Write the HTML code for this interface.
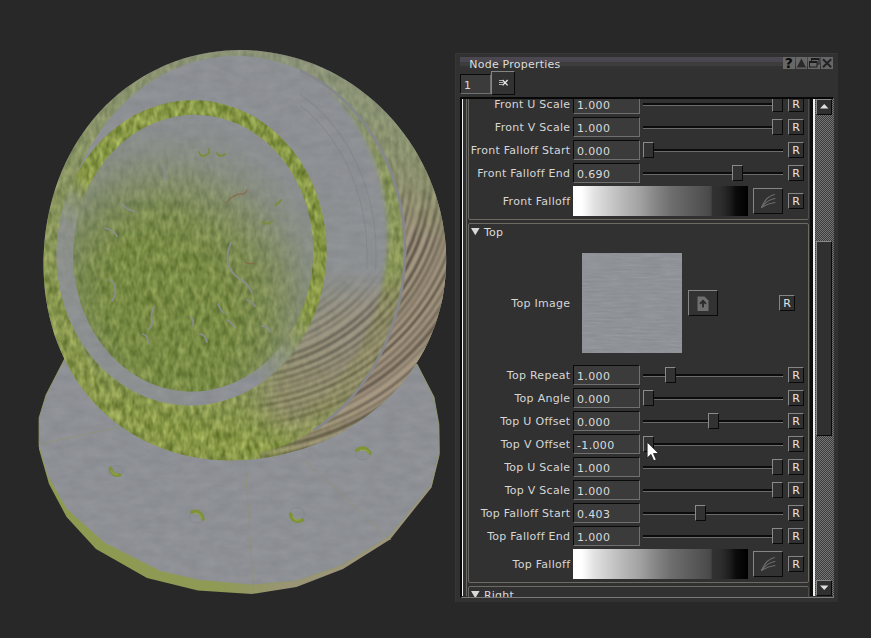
<!DOCTYPE html>
<html><head><meta charset="utf-8"><title>Node Properties</title>
<style>
html,body{margin:0;padding:0;background:#282828;}
body{width:871px;height:638px;position:relative;overflow:hidden;font-family:"DejaVu Sans","Liberation Sans",sans-serif;font-size:11px;color:#d4d4d4;}
div{position:absolute;box-sizing:border-box;}
#panel{left:455px;top:53px;width:383px;height:549px;background:#313131;border-top:1px solid #363636;border-left:1px solid #363636;}
#title{left:459.5px;top:57px;width:373.5px;height:12.800px;background:linear-gradient(180deg,#4c4852 0,#4a4650 4.600px,#3d3d3d 5.200px,#3c3c3c 8.800px,#343434 9.200px,#323232 12.800px);}
#ttext{left:469.3px;top:56.5px;font-size:11px;letter-spacing:0.22px;color:#dcdcdc;white-space:nowrap;line-height:16px;}
.tb{top:57px;width:12px;height:12px;background:#676767;}
.in{left:573px;width:67px;height:19.5px;background:#3b3b3b;border:1.5px solid #0a0a0a;border-right:1px solid #707070;border-bottom:1.5px solid #707070;line-height:21px;padding-left:3px;letter-spacing:0.35px;color:#dadada;white-space:nowrap;}
.lb{left:440px;width:130.300px;text-align:right;line-height:16px;height:16px;letter-spacing:0.27px;white-space:nowrap;color:#d6d6d6;}
.trk{left:643px;width:140px;height:2px;background:#0c0c0c;}
.trk2{left:643px;width:140px;height:1.400px;background:#6a6a6a;border-right:1px solid #888;}
.th{width:11px;height:16px;background:#323232;border-top:1px solid #8a8a8a;border-left:1px solid #8a8a8a;border-right:1.500px solid #0a0a0a;border-bottom:1.500px solid #0a0a0a;}
.rb{width:16px;height:16px;background:#303030;border-top:1px solid #858585;border-left:1px solid #858585;border-right:1.500px solid #0a0a0a;border-bottom:1.500px solid #0a0a0a;font-size:11px;line-height:15.400px;text-align:center;color:#e6e6e6;padding-left:0px}
.btn{background:#323232;border-top:1px solid #858585;border-left:1px solid #858585;border-right:1.500px solid #0a0a0a;border-bottom:1.500px solid #0a0a0a;box-sizing:content-box;}
.ramp{left:573px;width:175px;height:30px;background:linear-gradient(90deg,#fff 0%,#fff 5%,#e2e2e2 12%,#c2c2c2 24%,#a2a2a2 38%,#868686 47%,#6e6e6e 56%,#5c5c5c 67%,#4c4c4c 77%,#454545 79%,#313131 79.500%,#2e2e2e 84%,#262626 87%,#1b1b1b 90%,#0b0b0b 93%,#000 100%);}
.grp{border:1px solid #6c6a62;border-radius:2px;}
#scroll{left:459.600px;top:97px;width:374.900px;height:500.500px;border-top:2px solid #080808;border-left:2px solid #080808;border-right:1px solid #7a7a7a;border-bottom:1px solid #7a7a7a;overflow:hidden;}
#sbtrack{left:815px;top:99px;width:18.500px;height:497px;background:#585858 repeating-conic-gradient(#3c3c3c 0 25%,#747474 0 50%) 0 0/2px 2px;}
.sbb{left:815.500px;width:16.500px;height:15.500px;background:#303030;border-top:1px solid #8a8a8a;border-left:1px solid #8a8a8a;border-right:1.500px solid #0a0a0a;border-bottom:1.500px solid #0a0a0a;}
</style></head><body>
<svg width="460" height="638" viewBox="0 0 460 638" style="position:absolute;left:0;top:0">
<defs>
<clipPath id="sc"><path d="M446.1 256.0 C446.2 261.9 446.1 267.8 445.7 273.6 C445.3 279.5 444.6 285.4 443.7 291.2 C442.8 297.0 441.6 302.8 440.1 308.5 C438.6 314.3 436.9 319.9 434.9 325.5 C432.9 331.0 430.6 336.5 428.1 341.9 C425.6 347.2 422.9 352.5 419.9 357.5 C416.9 362.6 413.6 367.6 410.2 372.4 C406.7 377.1 403.0 381.8 399.2 386.2 C395.3 390.6 391.2 394.9 387.0 399.0 C382.7 403.0 378.3 406.9 373.7 410.6 C369.2 414.3 364.4 417.8 359.6 421.1 C354.7 424.3 349.7 427.4 344.6 430.3 C339.5 433.2 334.3 435.9 329.0 438.4 C323.7 440.8 318.3 443.1 312.9 445.2 C307.4 447.3 301.8 449.1 296.2 450.8 C290.6 452.5 284.9 453.9 279.1 455.2 C273.4 456.4 267.6 457.5 261.7 458.3 C255.8 459.1 249.9 459.7 244.0 460.0 C238.1 460.4 232.1 460.5 226.1 460.4 C220.1 460.2 214.1 459.8 208.2 459.2 C202.2 458.5 196.2 457.6 190.3 456.4 C184.4 455.2 178.5 453.7 172.7 451.9 C166.9 450.2 161.1 448.1 155.5 445.7 C149.9 443.4 144.4 440.8 139.0 437.8 C133.7 434.9 128.4 431.7 123.4 428.2 C118.4 424.8 113.5 421.0 108.9 417.1 C104.2 413.1 99.8 408.8 95.6 404.4 C91.4 400.0 87.4 395.3 83.7 390.5 C80.1 385.6 76.6 380.6 73.4 375.4 C70.2 370.3 67.3 365.0 64.7 359.5 C62.0 354.1 59.6 348.6 57.5 343.0 C55.3 337.4 53.5 331.7 51.9 325.9 C50.2 320.2 48.9 314.4 47.7 308.6 C46.6 302.8 45.7 296.9 45.0 291.1 C44.3 285.2 43.9 279.4 43.7 273.5 C43.4 267.7 43.4 261.8 43.6 256.0 C43.8 250.2 44.2 244.4 44.8 238.6 C45.4 232.8 46.2 227.0 47.2 221.3 C48.2 215.6 49.4 209.9 50.9 204.2 C52.3 198.6 53.9 193.0 55.7 187.5 C57.6 182.0 59.6 176.5 61.9 171.1 C64.2 165.7 66.7 160.4 69.4 155.2 C72.1 150.0 75.0 144.9 78.2 139.9 C81.3 134.9 84.7 130.1 88.3 125.4 C91.9 120.7 95.7 116.1 99.7 111.7 C103.7 107.4 108.0 103.1 112.4 99.2 C116.8 95.2 121.4 91.4 126.2 87.8 C131.0 84.2 136.0 80.9 141.1 77.7 C146.2 74.6 151.5 71.8 156.9 69.2 C162.3 66.5 167.8 64.2 173.4 62.1 C179.0 60.0 184.8 58.2 190.6 56.6 C196.4 55.1 202.3 53.8 208.2 52.8 C214.1 51.8 220.1 51.1 226.0 50.6 C232.0 50.2 238.0 50.0 244.0 50.1 C250.0 50.2 256.0 50.6 261.9 51.2 C267.9 51.9 273.8 52.8 279.6 53.9 C285.5 55.1 291.3 56.6 297.0 58.2 C302.7 59.9 308.3 61.9 313.9 64.0 C319.4 66.2 324.8 68.7 330.1 71.3 C335.4 74.0 340.6 76.8 345.6 79.9 C350.7 83.0 355.6 86.4 360.3 89.9 C365.1 93.4 369.7 97.1 374.1 101.0 C378.5 104.9 382.7 109.0 386.8 113.2 C390.9 117.4 394.7 121.9 398.4 126.4 C402.1 131.0 405.6 135.7 408.9 140.5 C412.2 145.4 415.3 150.3 418.2 155.4 C421.1 160.5 423.8 165.7 426.2 171.0 C428.7 176.3 431.0 181.7 433.0 187.2 C435.0 192.7 436.8 198.3 438.4 203.9 C440.0 209.5 441.3 215.3 442.4 221.0 C443.5 226.8 444.4 232.6 445.0 238.4 C445.6 244.2 446.0 250.1 446.1 256.0 Z"/></clipPath>
<clipPath id="eoc"><path d="M62.29 244.32 A171.5 196.5 2.7 0 1 404.91 260.48 A171.5 203 2.7 0 1 62.29 244.32 Z"/></clipPath>
<clipPath id="dlc2"><rect x="300" y="40" width="160" height="230"/></clipPath>
<clipPath id="dlc"><rect x="300" y="40" width="160" height="390"/></clipPath>
<clipPath id="dtc"><path d="M64.500 359 L46 395 L39 418 L39 446 L47.500 475.500 L66.600 509 L104.700 543 L160 571 L198 580 L252 585 L296.400 581 L343 565 L390 536 L431.500 485 L439.300 453.500 L439 425 L434 397 L417 364 Z"/></clipPath>
<filter id="grass" x="0" y="0" width="100%" height="100%" color-interpolation-filters="sRGB">
<feTurbulence type="fractalNoise" baseFrequency="0.190 0.095" numOctaves="2" seed="7"/>
<feColorMatrix values="0.460 0 0 0 0.295  0.420 0 0 0 0.380  0.340 0 0 0 0.100  0 0 0 0 1"/>
</filter>
<filter id="conc" x="0" y="0" width="100%" height="100%" color-interpolation-filters="sRGB">
<feTurbulence type="fractalNoise" baseFrequency="0.060 0.120" numOctaves="4" seed="5"/>
<feColorMatrix values="0.055 0 0 0 0.527  0.055 0 0 0 0.537  0.055 0 0 0 0.557  0 0 0 0 1"/>
</filter>
<filter id="b1"><feGaussianBlur stdDeviation="1"/></filter>
<filter id="b2"><feGaussianBlur stdDeviation="2"/></filter>
<filter id="b4"><feGaussianBlur stdDeviation="4"/></filter>
<filter id="b8"><feGaussianBlur stdDeviation="8"/></filter>
<filter id="b14"><feGaussianBlur stdDeviation="14"/></filter>
<linearGradient id="rimg" gradientUnits="userSpaceOnUse" x1="40" y1="0" x2="440" y2="0">
<stop offset="0" stop-color="#8d9a50"/><stop offset="0.450" stop-color="#8f9a55"/><stop offset="0.620" stop-color="#9a9576"/><stop offset="1" stop-color="#a09482"/></linearGradient>
<!-- grass-mask gradients (white = grass) -->
<linearGradient id="mout" gradientUnits="userSpaceOnUse" x1="300" y1="52" x2="200" y2="453">
<stop offset="0" stop-color="#585858"/><stop offset="0.200" stop-color="#808080"/><stop offset="0.450" stop-color="#a8a8a8"/><stop offset="0.700" stop-color="#e0e0e0"/><stop offset="1" stop-color="#f8f8f8"/></linearGradient>
<linearGradient id="mband" gradientUnits="userSpaceOnUse" x1="330" y1="60" x2="230" y2="440">
<stop offset="0" stop-color="#000"/><stop offset="0.500" stop-color="#080808"/><stop offset="0.700" stop-color="#505050"/><stop offset="0.850" stop-color="#c0c0c0"/><stop offset="1" stop-color="#fff"/></linearGradient>
<radialGradient id="mbowl" gradientUnits="userSpaceOnUse" cx="150" cy="330" r="225">
<stop offset="0" stop-color="#f4f4f4"/><stop offset="0.380" stop-color="#eeeeee"/><stop offset="0.520" stop-color="#c4c4c4"/><stop offset="0.640" stop-color="#848484"/><stop offset="0.770" stop-color="#3c3c3c"/><stop offset="0.900" stop-color="#121212"/><stop offset="1" stop-color="#050505"/></radialGradient>
<radialGradient id="haze" cx="0.520" cy="0.640" r="0.640"><stop offset="0" stop-color="#000" stop-opacity="0"/><stop offset="0.550" stop-color="#000" stop-opacity="0"/><stop offset="0.850" stop-color="#000" stop-opacity="0.300"/><stop offset="1" stop-color="#000" stop-opacity="0.500"/></radialGradient>
<linearGradient id="mringL" gradientUnits="userSpaceOnUse" x1="233.600" y1="188.100" x2="123.800" y2="355.300">
<stop offset="0" stop-color="#fff"/><stop offset="0.400" stop-color="#fff"/><stop offset="0.500" stop-color="#808080"/><stop offset="0.640" stop-color="#262626"/><stop offset="1" stop-color="#0c0c0c"/></linearGradient>
<linearGradient id="mringR" gradientUnits="userSpaceOnUse" x1="233.600" y1="188.100" x2="123.800" y2="355.300">
<stop offset="0" stop-color="#fff"/><stop offset="0.280" stop-color="#fff"/><stop offset="0.500" stop-color="#707070"/><stop offset="0.720" stop-color="#000"/><stop offset="1" stop-color="#000"/></linearGradient>
<clipPath id="halfR2"><rect x="300" y="60" width="160" height="400"/></clipPath>
<linearGradient id="mstrip" gradientUnits="userSpaceOnUse" x1="0" y1="90" x2="0" y2="440">
<stop offset="0" stop-color="#707070"/><stop offset="0.250" stop-color="#b8b8b8"/><stop offset="0.600" stop-color="#d0d0d0"/><stop offset="1" stop-color="#e8e8e8"/></linearGradient>
<clipPath id="halfL"><rect x="0" y="0" width="190" height="638"/></clipPath>
<clipPath id="halfR"><rect x="190" y="0" width="270" height="638"/></clipPath>
<linearGradient id="mwood" gradientUnits="userSpaceOnUse" x1="420" y1="140" x2="330" y2="450">
<stop offset="0" stop-color="#000"/><stop offset="0.120" stop-color="#404040"/><stop offset="0.300" stop-color="#f0f0f0"/><stop offset="0.800" stop-color="#fff"/><stop offset="1" stop-color="#c8c8c8"/></linearGradient>
<mask id="gm" maskUnits="userSpaceOnUse" x="0" y="0" width="460" height="638">
<rect x="40" y="46" width="410" height="420" fill="url(#mout)"/>
<g clip-path="url(#eoc)">
<rect x="40" y="46" width="410" height="420" fill="url(#mband)"/>
<g clip-path="url(#halfR2)"><path d="M62.29 244.32 A171.5 196.5 2.7 0 1 404.91 260.48 A171.5 203 2.7 0 1 62.29 244.32 Z M44.69 231.12 A171.5 196.5 2.7 0 1 387.31 247.28 A171.5 203 2.7 0 1 44.69 231.12 Z" fill-rule="evenodd" fill="url(#mstrip)" filter="url(#b2)"/></g>
</g>
<g clip-path="url(#halfL)"><ellipse cx="191.500" cy="252.900" rx="135.100" ry="152.700" transform="rotate(2.600 191.500 252.900)" fill="url(#mringL)"/></g><g clip-path="url(#halfR)"><ellipse cx="191.500" cy="252.900" rx="135.100" ry="152.700" transform="rotate(2.600 191.500 252.900)" fill="url(#mringR)"/></g>
<ellipse cx="193.200" cy="253.200" rx="120" ry="138.400" transform="rotate(2.800 193.200 253.200)" fill="url(#mbowl)"/><ellipse cx="193.200" cy="253.200" rx="120" ry="138.400" transform="rotate(2.800 193.200 253.200)" fill="url(#haze)"/>
</mask>
<mask id="bm" maskUnits="userSpaceOnUse" x="0" y="0" width="460" height="638"><ellipse cx="193.200" cy="253.200" rx="120" ry="138.400" transform="rotate(2.800 193.200 253.200)" fill="url(#mbowl)"/></mask>
<mask id="wm" maskUnits="userSpaceOnUse" x="0" y="0" width="460" height="638">
<rect x="260" y="46" width="200" height="420" fill="url(#mwood)"/>
<g clip-path="url(#eoc)"><rect x="40" y="46" width="410" height="420" fill="#000"/><path d="M320 300 L 420 285 L 405 390 L 300 428 L 232 424 L 262 388 Z" fill="#a8a8a8" filter="url(#b14)"/></g>
<ellipse cx="191.500" cy="252.900" rx="135.100" ry="152.700" transform="rotate(2.600 191.500 252.900)" fill="#000"/>
<path d="M40 300 L 200 300 L 290 460 L 40 460 Z" fill="#000" filter="url(#b14)"/>
</mask>
</defs>
<!-- disc -->
<path d="M64.500 359 L46 395 L39 418 L39 449 L49 484 L66.600 517 L96 549 L147 578 L198 590.500 L252 594 L296.400 587 L343 569 L390 539.500 L431.500 487.500 L439.300 456 L439 425 L434 397 L417 364 Z" fill="url(#rimg)"/>
<g clip-path="url(#dtc)"><rect x="30" y="350" width="420" height="250" filter="url(#conc)"/></g>
<g stroke="#8f9468" stroke-width="0.800" fill="none" opacity="0.750"><path d="M244.800 455 L253.400 590"/><path d="M303 459 L391 540"/><path d="M40 444 L136 423.500"/></g>
<path d="M64.500 359 L46 395 L39 418 L39 446 L47.500 475.500 L66.600 509 L104.700 543 L160 571 L198 580 L252 585 L296.400 581 L343 565 L390 536 L431.500 485 L439.300 453.500 L439 425 L434 397 L417 364 Z" fill="none" stroke="#909a60" stroke-width="1" opacity="0.700"/>
<g fill="none" stroke="#83858a" stroke-width="0.800" opacity="0.800"><ellipse cx="116" cy="471" rx="7" ry="5.500"/><ellipse cx="197" cy="517" rx="7.500" ry="6"/><ellipse cx="297" cy="514" rx="7.500" ry="6.500"/><ellipse cx="363" cy="454" rx="7.500" ry="6"/></g>
<g fill="none" stroke="#7f9238" stroke-width="3.600" stroke-linecap="round"><path d="M110.500 468 q1 8 9 7"/><path d="M192 512 q8 -3 11 7"/><path d="M290.500 514 q2 10 12 6"/><path d="M357 450 q8 -5 13 3"/></g>
<g fill="none" stroke="#a3b25a" stroke-width="1" opacity="0.700" stroke-linecap="round"><path d="M111.500 471 q2 4 6 3.500"/><path d="M195 513 q5 0 6.500 5"/><path d="M292.500 517 q3 5 8 2.500"/><path d="M360 450.500 q6 -2 9 2"/></g>
<!-- sphere -->
<g clip-path="url(#sc)">
<rect x="40" y="46" width="410" height="420" filter="url(#conc)"/>
<rect x="40" y="46" width="410" height="420" filter="url(#grass)" mask="url(#gm)"/>
<rect x="60" y="100" width="270" height="310" fill="#3d5a2e" opacity="0.200" mask="url(#bm)"/>
<g mask="url(#wm)"><rect x="40" y="46" width="410" height="420" fill="#a89a86"/>
<g fill="none" stroke="#463c34" filter="url(#b1)"><ellipse cx="231" cy="169" rx="120.0" ry="120.0" stroke-width="2.0" opacity="0.49"/>
<ellipse cx="231" cy="169" rx="126.4" ry="126.4" stroke-width="1.9" opacity="0.44"/>
<ellipse cx="231" cy="169" rx="132.8" ry="132.8" stroke-width="3.4" opacity="0.90"/>
<ellipse cx="231" cy="169" rx="140.5" ry="140.5" stroke-width="2.9" opacity="0.48"/>
<ellipse cx="231" cy="169" rx="146.4" ry="146.4" stroke-width="2.0" opacity="0.45"/>
<ellipse cx="231" cy="169" rx="152.2" ry="152.2" stroke-width="3.5" opacity="0.91"/>
<ellipse cx="231" cy="169" rx="160.0" ry="160.0" stroke-width="2.2" opacity="0.83"/>
<ellipse cx="231" cy="169" rx="166.1" ry="166.1" stroke-width="3.3" opacity="0.73"/>
<ellipse cx="231" cy="169" rx="174.1" ry="174.1" stroke-width="2.0" opacity="0.88"/>
<ellipse cx="231" cy="169" rx="181.2" ry="181.2" stroke-width="2.8" opacity="0.75"/>
<ellipse cx="231" cy="169" rx="186.8" ry="186.8" stroke-width="2.0" opacity="0.63"/>
<ellipse cx="231" cy="169" rx="195.1" ry="195.1" stroke-width="2.9" opacity="0.87"/>
<ellipse cx="231" cy="169" rx="201.2" ry="201.2" stroke-width="2.9" opacity="0.90"/>
<ellipse cx="231" cy="169" rx="209.2" ry="209.2" stroke-width="2.8" opacity="0.86"/>
<ellipse cx="231" cy="169" rx="215.7" ry="215.7" stroke-width="2.7" opacity="0.71"/>
<ellipse cx="231" cy="169" rx="221.3" ry="221.3" stroke-width="3.4" opacity="0.53"/>
<ellipse cx="231" cy="169" rx="226.4" ry="226.4" stroke-width="3.1" opacity="0.38"/>
<ellipse cx="231" cy="169" rx="232.4" ry="232.4" stroke-width="2.7" opacity="0.67"/>
<ellipse cx="231" cy="169" rx="238.6" ry="238.6" stroke-width="2.2" opacity="0.95"/>
<ellipse cx="231" cy="169" rx="245.0" ry="245.0" stroke-width="3.1" opacity="0.47"/>
<ellipse cx="231" cy="169" rx="251.0" ry="251.0" stroke-width="3.3" opacity="0.56"/>
<ellipse cx="231" cy="169" rx="257.1" ry="257.1" stroke-width="3.6" opacity="0.69"/>
<ellipse cx="231" cy="169" rx="262.5" ry="262.5" stroke-width="2.3" opacity="0.39"/>
<ellipse cx="231" cy="169" rx="270.2" ry="270.2" stroke-width="2.3" opacity="0.72"/>
<ellipse cx="231" cy="169" rx="276.3" ry="276.3" stroke-width="2.7" opacity="0.46"/>
<ellipse cx="231" cy="169" rx="281.5" ry="281.5" stroke-width="3.6" opacity="0.77"/>
<ellipse cx="231" cy="169" rx="289.8" ry="289.8" stroke-width="3.7" opacity="0.79"/>
<ellipse cx="231" cy="169" rx="294.9" ry="294.9" stroke-width="3.7" opacity="0.52"/>
<ellipse cx="231" cy="169" rx="302.6" ry="302.6" stroke-width="3.7" opacity="0.60"/>
<ellipse cx="231" cy="169" rx="309.8" ry="309.8" stroke-width="2.4" opacity="0.84"/>
<ellipse cx="231" cy="169" rx="315.4" ry="315.4" stroke-width="2.1" opacity="0.62"/></g></g>
<g fill="none" stroke-linecap="round" stroke-width="1.800">
<g stroke="#8b8d93" opacity="0.900"><path d="M110 280 q7 3 5 14 q-1 5 -3 7"/><path d="M154 307 q-4 8 -2 14 q1 4 -3 8"/><path d="M143 334 q6 2 5 10"/><path d="M191 317 q3 4 2 9"/><path d="M200 334 q6 1 7 8"/><path d="M218 304 q2 6 6 9"/><path d="M227 320 q5 2 7 8"/><path d="M231 243 q-6 12 -2 24 q6 10 14 14 q6 4 9 12"/><path d="M247 300 q6 2 8 6"/><path d="M122 204 q5 6 12 7"/><path d="M105 228 q8 2 12 8"/><path d="M164 166 q-1 8 2 14"/><path d="M262 326 q6 0 8 6"/></g>
<g stroke="#7c8c3a"><path d="M199 152 q2 7 9 2 q2 -2 1 -5"/><path d="M217 153 q3 5 8 1"/><path d="M262 222 q6 4 10 -1"/><path d="M275 205 q4 -1 6 -5"/></g>
<g stroke="#8a6a48" stroke-width="1.200"><path d="M226 203 q8 -10 18 -9 q2 -1 3 -4"/><path d="M245 262 q4 3 9 1"/></g>
</g>
<g clip-path="url(#dlc2)" fill="none" stroke="#7e8085" stroke-width="1" opacity="0.550"><ellipse cx="226" cy="258" rx="150" ry="186" transform="rotate(2.700 226 258)"/><ellipse cx="224" cy="260" rx="143" ry="180" transform="rotate(2.700 224 260)"/></g>
<g clip-path="url(#dlc)"><path d="M62.29 244.32 A171.5 196.5 2.7 0 1 404.91 260.48 A171.5 203 2.7 0 1 62.29 244.32 Z" fill="none" stroke="#85878c" stroke-width="2.600"/></g>
</g>
</svg>
<div id="panel"></div>
<div id="title"></div>
<div id="ttext">Node Properties</div>
<div class="tb" style="left:783px"></div><div class="tb" style="left:796px;width:11px"></div><div class="tb" style="left:808px"></div><div class="tb" style="left:821px"></div>
<svg width="52" height="13" viewBox="0 0 52 13" style="position:absolute;left:783px;top:57px">
<text x="1.800" y="11.400" font-family="DejaVu Sans, Liberation Sans, sans-serif" font-weight="bold" font-size="14" fill="#0a0a0a">?</text>
<path d="M14 9.900 L18.400 1.400 L22.800 9.900 Z" fill="#2a2a2a"/><path d="M13.500 10.700h10" stroke="#4a4042" stroke-width="1"/>
<g fill="none" stroke="#1c1c1c" stroke-width="1"><rect x="28.500" y="1.500" width="7.500" height="5.500"/><rect x="26.500" y="4.500" width="7.500" height="5.500" fill="#676767"/><path d="M26.500 5.500h7.500M28.500 2.500h7.500"/></g>
<path d="M40 2.200 L48.200 10.200 M48.200 2.200 L40 10.200" stroke="#222" stroke-width="2" fill="none"/>
</svg>
<div class="in" style="left:460px;top:73.500px;width:30.500px;height:20px">1</div>
<div class="btn" style="left:491px;top:71px;width:22px;height:21.500px"><svg width="22" height="22" viewBox="0 0 22 22" style="position:absolute;left:0;top:0"><path d="M7 8.500h3.500M7 10.500h4.500M7 12.500h3.500" stroke="#b0b0b0" stroke-width="1" fill="none"/><path d="M10.600 8l5 5.400M15.600 8l-5 5.400" stroke="#ececec" stroke-width="1.300" fill="none"/></svg></div>
<div id="scroll"></div>
<div style="left:461.800px;top:99px;width:1.600px;height:497px;background:#f0f0f0"></div>
<div style="left:466.300px;top:99px;width:1px;height:497px;background:#6a6a6a"></div>
<div style="left:810px;top:99px;width:2.500px;height:497px;background:#0c0c0c"></div>
<div style="left:813px;top:99px;width:1.500px;height:497px;background:#f0f0f0"></div>
<div class="grp" style="left:468px;top:90px;width:340.500px;height:130px;clip-path:inset(9px 0 0 0)"></div>
<div class="grp" style="left:468px;top:223px;width:340.500px;height:360px"></div>
<div class="grp" style="left:468px;top:586px;width:340.500px;height:60px;clip-path:inset(0 0 49px 0)"></div>
<svg width="10" height="8" style="position:absolute;left:471px;top:228px"><path d="M0 0h8.600L4.300 7.200z" fill="#d8d8d8"/></svg>
<div style="left:484px;top:225px;line-height:16px;letter-spacing:0.2px;color:#dcdcdc">Top</div>
<div style="left:460px;top:586px;width:348px;height:10.500px;overflow:hidden"><svg width="10" height="8" style="position:absolute;left:11px;top:5px"><path d="M0 0h8.600L4.300 7.200z" fill="#d8d8d8"/></svg><div style="left:24px;top:2px;line-height:16px;letter-spacing:0.2px;color:#dcdcdc">Right</div></div>
<div class="lb" style="top:296px">Top Image</div>
<div style="left:582px;top:253px;width:100px;height:100px;background:#8d9095"><svg width="100" height="100" style="position:absolute;left:0;top:0"><filter id="cn" x="0" y="0" width="100%" height="100%"><feTurbulence type="fractalNoise" baseFrequency="0.05 0.5" numOctaves="3" seed="3"/><feColorMatrix values="0 0 0 0 0.750  0 0 0 0 0.760  0 0 0 0 0.780  0.500 0.500 0 0 -0.300"/></filter><rect width="100" height="100" fill="#8a8d92"/><rect width="100" height="100" filter="url(#cn)" opacity="0.300"/></svg></div>
<div class="btn" style="left:688px;top:290px;width:27.500px;height:23.500px"><svg width="28" height="23" viewBox="0 0 28 23" style="position:absolute;left:0;top:0"><path d="M8.500 5.500h7l4 4v10.500h-11z" fill="#6f6f6f"/><path d="M14 16.500v-6M11 12.800l3-3 3 3" stroke="#2a2a2a" stroke-width="1.800" fill="none"/></svg></div>
<div class="rb" style="left:779px;top:295px">R</div>
<div style="left:0;top:0;width:871px;height:638px;clip-path:inset(99px 0 41.500px 0)">
<div class="lb" style="top:97px">Front U Scale</div>
<div class="in" style="top:94.2px">1.000</div>
<div class="trk" style="top:102.5px"></div><div class="trk2" style="top:104.6px"></div>
<div class="th" style="left:772.0px;top:96px"></div>
<div class="rb" style="left:788px;top:96px">R</div>
<div class="lb" style="top:120px">Front V Scale</div>
<div class="in" style="top:117.2px">1.000</div>
<div class="trk" style="top:125.5px"></div><div class="trk2" style="top:127.6px"></div>
<div class="th" style="left:772.0px;top:119px"></div>
<div class="rb" style="left:788px;top:119px">R</div>
<div class="lb" style="top:143px">Front Falloff Start</div>
<div class="in" style="top:140.2px">0.000</div>
<div class="trk" style="top:148.5px"></div><div class="trk2" style="top:150.6px"></div>
<div class="th" style="left:643.0px;top:142px"></div>
<div class="rb" style="left:788px;top:142px">R</div>
<div class="lb" style="top:166px">Front Falloff End</div>
<div class="in" style="top:163.2px">0.690</div>
<div class="trk" style="top:171.5px"></div><div class="trk2" style="top:173.6px"></div>
<div class="th" style="left:732.0px;top:165px"></div>
<div class="rb" style="left:788px;top:165px">R</div>
<div class="lb" style="top:194px">Front Falloff</div>
<div class="ramp" style="top:185.7px"></div>
<div class="btn" style="left:753px;top:188px;width:28px;height:23.5px"><svg width="28" height="24" viewBox="0 0 28 24" style="position:absolute;left:0;top:0"><g fill="none" stroke="#6e6e6e" stroke-width="1.1" stroke-linecap="round"><path d="M7.5 18.5 C10 12 14 7 20.5 5.5"/><path d="M7.500 18.5 C11 13.500 15 10.500 21 9.500"/><path d="M7.500 18.500 C12 15.500 16 14 21 13.500"/></g></svg></div>
<div class="rb" style="left:788px;top:193px">R</div>
<div class="lb" style="top:368px">Top Repeat</div>
<div class="in" style="top:365.2px">1.000</div>
<div class="trk" style="top:373.5px"></div><div class="trk2" style="top:375.6px"></div>
<div class="th" style="left:664.9px;top:367px"></div>
<div class="rb" style="left:788px;top:367px">R</div>
<div class="lb" style="top:391px">Top Angle</div>
<div class="in" style="top:388.2px">0.000</div>
<div class="trk" style="top:396.5px"></div><div class="trk2" style="top:398.6px"></div>
<div class="th" style="left:643.0px;top:390px"></div>
<div class="rb" style="left:788px;top:390px">R</div>
<div class="lb" style="top:414px">Top U Offset</div>
<div class="in" style="top:411.2px">0.000</div>
<div class="trk" style="top:419.5px"></div><div class="trk2" style="top:421.6px"></div>
<div class="th" style="left:707.5px;top:413px"></div>
<div class="rb" style="left:788px;top:413px">R</div>
<div class="lb" style="top:437px">Top V Offset</div>
<div class="in" style="top:434.2px">-1.000</div>
<div class="trk" style="top:442.5px"></div><div class="trk2" style="top:444.6px"></div>
<div class="th" style="left:643.0px;top:436px"></div>
<div class="rb" style="left:788px;top:436px">R</div>
<div class="lb" style="top:460px">Top U Scale</div>
<div class="in" style="top:457.2px">1.000</div>
<div class="trk" style="top:465.5px"></div><div class="trk2" style="top:467.6px"></div>
<div class="th" style="left:772.0px;top:459px"></div>
<div class="rb" style="left:788px;top:459px">R</div>
<div class="lb" style="top:483px">Top V Scale</div>
<div class="in" style="top:480.2px">1.000</div>
<div class="trk" style="top:488.5px"></div><div class="trk2" style="top:490.6px"></div>
<div class="th" style="left:772.0px;top:482px"></div>
<div class="rb" style="left:788px;top:482px">R</div>
<div class="lb" style="top:506px">Top Falloff Start</div>
<div class="in" style="top:503.2px">0.403</div>
<div class="trk" style="top:511.5px"></div><div class="trk2" style="top:513.6px"></div>
<div class="th" style="left:695.0px;top:505px"></div>
<div class="rb" style="left:788px;top:505px">R</div>
<div class="lb" style="top:529px">Top Falloff End</div>
<div class="in" style="top:526.2px">1.000</div>
<div class="trk" style="top:534.5px"></div><div class="trk2" style="top:536.6px"></div>
<div class="th" style="left:772.0px;top:528px"></div>
<div class="rb" style="left:788px;top:528px">R</div>
<div class="lb" style="top:557px">Top Falloff</div>
<div class="ramp" style="top:548.7px"></div>
<div class="btn" style="left:753px;top:551px;width:28px;height:23.5px"><svg width="28" height="24" viewBox="0 0 28 24" style="position:absolute;left:0;top:0"><g fill="none" stroke="#6e6e6e" stroke-width="1.1" stroke-linecap="round"><path d="M7.5 18.5 C10 12 14 7 20.5 5.5"/><path d="M7.500 18.5 C11 13.500 15 10.500 21 9.500"/><path d="M7.500 18.500 C12 15.500 16 14 21 13.500"/></g></svg></div>
<div class="rb" style="left:788px;top:556px">R</div>
</div>
<div id="sbtrack"></div>
<div class="sbb" style="top:99px"><svg width="14" height="13" style="position:absolute;left:0;top:0"><path d="M3 8.500h8.500L7.250 4z" fill="#e0e0e0"/></svg></div>
<div class="sbb" style="top:580px"><svg width="14" height="13" style="position:absolute;left:0;top:0"><path d="M3 4.500h8.500L7.250 9z" fill="#e0e0e0"/></svg></div>
<div class="sbb" style="top:240.500px;height:195px"></div>
<svg width="16" height="22" viewBox="0 0 14.500 20" style="position:absolute;left:646.300px;top:441.300px"><path d="M1 1v14.500l3.500-3.300 2.500 5.800 2.300-1-2.500-5.600h4.700z" fill="#fff" stroke="#181818" stroke-width="0.700"/></svg>
</body></html>
